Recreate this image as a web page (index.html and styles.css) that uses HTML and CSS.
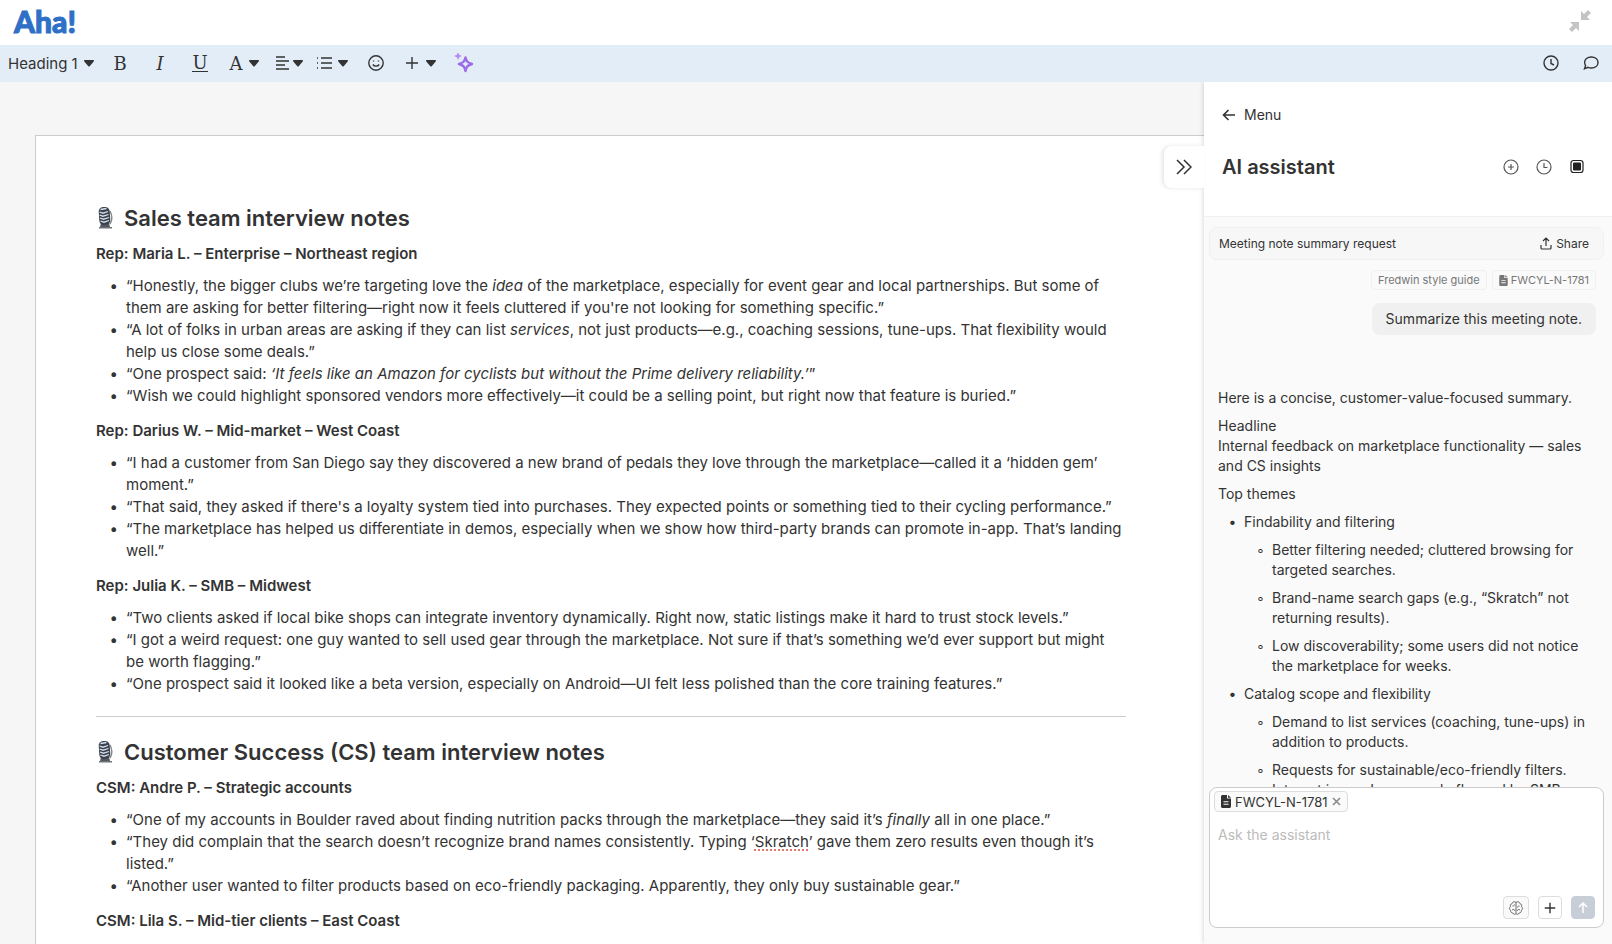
FILE: index.html
```html
<!DOCTYPE html>
<html lang="en">
<head>
    <meta charset="UTF-8">
    <meta name="viewport" content="width=device-width, initial-scale=1.0">
    <title>Aha! - Interview notes</title>
    <link rel="stylesheet" href="styles.css">
</head>
<body>
    <!-- Shared icons -->
    <svg class="sprite" aria-hidden="true">
        <symbol id="caret" viewBox="0 0 10 7"><path d="M1 0h8c.9 0 1.300 1 .7 1.600L5.700 6.300c-.4.4-1 .4-1.400 0L.3 1.600C-.3 1 .1 0 1 0z" fill="currentColor"/></symbol>
        <symbol id="clock" viewBox="0 0 16 16"><circle cx="8" cy="8" r="7"/><path d="M8 4v4.500l3 1.500"/></symbol>
        <symbol id="plus" viewBox="0 0 16 16"><path d="M8 2v12M2 8h12"/></symbol>
        <symbol id="file" viewBox="0 0 10 13"><path d="M1.500 0H6v3.500h4v8c0 .8-.7 1.500-1.500 1.500h-7C.7 13 0 12.300 0 11.500v-10C0 .7.700 0 1.500 0zM7 0l3 2.700H7zM2.500 6.200v1h5v-1zM2.500 8.700v1h5v-1z" fill="currentColor" fill-rule="evenodd" stroke="none"/></symbol>
        <symbol id="mic" viewBox="0 0 18 24">
            <path d="M5 17l-1 4h10l-1-4z" fill="#55585e"/>
            <path d="M3 21h13v1.500H3z" fill="#6d7076"/>
            <path d="M14 5c2 4 2.500 9 0 13" fill="none" stroke="#85888e" stroke-width="1.500"/>
            <rect x="3" y="1" width="11" height="18" rx="4.500" fill="#3c424c" transform="rotate(-4 8 10)"/>
            <path d="M4.500 3.500l6-1M3.500 6l3.500 1.200 5-1.700M3.500 9l3.500 1.200 5.500-1.700M4 12l3.500 1.200 5.500-1.700M4.500 15l3.500 1.200 5-1.700" fill="none" stroke="#d4dfec" stroke-width="1.300"/>
        </symbol>
    </svg>

    <header class="topbar">
        <a href="#" class="logo">Aha!</a>
        <button class="exit" aria-label="Exit full screen">
            <svg width="22" height="22" viewBox="0 0 22 22" fill="#c4c4c4"><path d="M12 1v9h9l-3-3 4-4-3-3-4 4zM10 21v-9H1l3 3-4 4 3 3 4-4z"/></svg>
        </button>
    </header>

    <div class="toolbar">
        <div class="heading-picker">
            <select aria-label="Text style"><option>Heading 1</option><option>Heading 2</option></select>
            <svg class="caret"><use href="#caret"/></svg>
        </div>
        <button class="tool letter" aria-label="Bold">B</button>
        <button class="tool letter" aria-label="Italic"><i>I</i></button>
        <button class="tool letter" aria-label="Underline"><span class="under">U</span></button>
        <button class="tool drop letter" aria-label="Text color">A <svg class="caret"><use href="#caret"/></svg></button>
        <button class="tool drop narrow" aria-label="Align">
            <svg class="icon" viewBox="0 0 16 16"><path d="M2 2h9M2 6h13M2 10h9M2 14h13"/></svg>
            <svg class="caret"><use href="#caret"/></svg>
        </button>
        <button class="tool drop" aria-label="List">
            <svg class="icon" viewBox="0 0 16 16"><path d="M5 3h11M5 8h11M5 13h11M1 3h1M1 8h1M1 13h1"/></svg>
            <svg class="caret"><use href="#caret"/></svg>
        </button>
        <button class="tool" aria-label="Emoji">
            <svg class="icon" viewBox="0 0 16 16"><circle cx="8" cy="8" r="7.200"/><path d="M4.800 9.500c1.400 2.200 5 2.200 6.400 0M5.500 5.600v1M10.500 5.600v1"/></svg>
        </button>
        <button class="tool drop" aria-label="Insert">
            <svg class="icon"><use href="#plus"/></svg>
            <svg class="caret"><use href="#caret"/></svg>
        </button>
        <button class="tool" aria-label="AI">
            <svg width="20" height="20" viewBox="0 0 20 20" fill="none">
                <path d="M11.500 4.500c.9 4 2 5.100 6.500 6.500-4.500 1.400-5.600 2.500-6.500 7-.9-4.500-2-5.600-6.500-7 4.500-1.400 5.600-2.500 6.500-6.500z" stroke="#9b6bea" stroke-width="2.400" stroke-linejoin="round"/>
                <path d="M4 0l1.200 2.800L8 4 5.200 5.200 4 8 2.800 5.200 0 4l2.800-1.200z" transform="translate(0 -1)" fill="#b58cf5"/>
            </svg>
        </button>
        <div class="toolbar-right">
            <button class="tool" aria-label="History"><svg class="icon"><use href="#clock"/></svg></button>
            <button class="tool" aria-label="Comments">
                <svg class="icon" viewBox="0 0 16 16"><path d="M8.300 2C12.300 2 15 4.400 15 7.500S12.300 13 8.300 13c-1.200 0-2.300-.2-3.300-.7L1.500 13.700 2.600 10.500C1.900 9.600 1.600 8.600 1.600 7.500 1.600 4.400 4.300 2 8.300 2z"/></svg>
            </button>
        </div>
    </div>

    <div class="workspace">
        <main class="canvas">
            <article class="note">
                <h1><svg class="mic"><use href="#mic"/></svg>Sales team interview notes</h1>
                <h2>Rep: Maria L. – Enterprise – Northeast region</h2>
                <ul>
                    <li>“Honestly, the bigger clubs we’re targeting love the <em>idea</em> of the marketplace, especially for event gear and local partnerships. But some of them are asking for better filtering—right now it feels cluttered if you're not looking for something specific.”</li>
                    <li>“A lot of folks in urban areas are asking if they can list <em>services</em>, not just products—e.g., coaching sessions, tune-ups. That flexibility would help us close some deals.”</li>
                    <li>“One prospect said: <em>‘It feels like an Amazon for cyclists but without the Prime delivery reliability.’</em>”</li>
                    <li>“Wish we could highlight sponsored vendors more effectively—it could be a selling point, but right now that feature is buried.”</li>
                </ul>
                <h2>Rep: Darius W. – Mid-market – West Coast</h2>
                <ul>
                    <li>“I had a customer from San Diego say they discovered a new brand of pedals they love through the marketplace—called it a ‘hidden gem’ moment.”</li>
                    <li>“That said, they asked if there's a loyalty system tied into purchases. They expected points or something tied to their cycling performance.”</li>
                    <li>“The marketplace has helped us differentiate in demos, especially when we show how third-party brands can promote in-app. That’s landing well.”</li>
                </ul>
                <h2>Rep: Julia K. – SMB – Midwest</h2>
                <ul>
                    <li>“Two clients asked if local bike shops can integrate inventory dynamically. Right now, static listings make it hard to trust stock levels.”</li>
                    <li>“I got a weird request: one guy wanted to sell used gear through the marketplace. Not sure if that’s something we’d ever support but might be worth flagging.”</li>
                    <li>“One prospect said it looked like a beta version, especially on Android—UI felt less polished than the core training features.”</li>
                </ul>
                <hr>
                <h1><svg class="mic"><use href="#mic"/></svg>Customer Success (CS) team interview notes</h1>
                <h2>CSM: Andre P. – Strategic accounts</h2>
                <ul>
                    <li>“One of my accounts in Boulder raved about finding nutrition packs through the marketplace—they said it’s <em>finally</em> all in one place.”</li>
                    <li>“They did complain that the search doesn’t recognize brand names consistently. Typing ‘<span class="misspelled">Skratch</span>’ gave them zero results even though it’s listed.”</li>
                    <li>“Another user wanted to filter products based on eco-friendly packaging. Apparently, they only buy sustainable gear.”</li>
                </ul>
                <h2>CSM: Lila S. – Mid-tier clients – East Coast</h2>
            </article>
        </main>

        <aside class="panel">
            <button class="collapse" aria-label="Collapse panel">
                <svg width="16" height="16" viewBox="0 0 16 16" fill="none" stroke="currentColor" stroke-width="1.500"><path d="M1 1l7 7-7 7M8 1l7 7-7 7"/></svg>
            </button>

            <div class="panel-head">
                <a href="#" class="back">
                    <svg width="14" height="12" viewBox="0 0 14 12" fill="none" stroke="currentColor" stroke-width="1.600"><path d="M13 6H2M6.500 1l-5 5 5 5"/></svg>
                    Menu
                </a>
                <div class="title-row">
                    <h2>AI assistant</h2>
                    <button class="round" aria-label="New chat"><svg viewBox="0 0 16 16"><circle cx="8" cy="8" r="7"/><path d="M8 5v6M5 8h6"/></svg></button>
                    <button class="round" aria-label="Chat history"><svg viewBox="0 0 16 16"><circle cx="8" cy="8" r="7"/><path d="M8 4v4.500h3.500"/></svg></button>
                    <button class="round dark" aria-label="Panel size"><svg viewBox="0 0 16 16"><rect x="2" y="1.500" width="12" height="12" rx="2.500"/><rect x="4" y="3.500" width="8" height="8" rx="1" fill="currentColor" stroke="none"/></svg></button>
                </div>
            </div>

            <div class="chat">
                <div class="chat-title">
                    <span>Meeting note summary request</span>
                    <button class="share">
                        <svg width="12" height="13" viewBox="0 0 12 13" fill="none" stroke="currentColor" stroke-width="1.200"><path d="M6 9V1M3 4l3-3 3 3M1 8v3c0 .6.400 1 1 1h8c.6 0 1-.4 1-1V8"/></svg>
                        Share
                    </button>
                </div>
                <div class="context">
                    <span class="tag">Fredwin style guide</span>
                    <span class="tag"><svg width="9" height="11"><use href="#file"/></svg>FWCYL-N-1781</span>
                </div>
                <p class="prompt">Summarize this meeting note.</p>

                <div class="answer">
                    <p>Here is a concise, customer-value-focused summary.</p>
                    <p>Headline<br>Internal feedback on marketplace functionality — sales and CS insights</p>
                    <p>Top themes</p>
                    <ul>
                        <li>Findability and filtering
                            <ul>
                                <li>Better filtering needed; cluttered browsing for targeted searches.</li>
                                <li>Brand-name search gaps (e.g., “Skratch” not returning results).</li>
                                <li>Low discoverability; some users did not notice the marketplace for weeks.</li>
                            </ul>
                        </li>
                        <li>Catalog scope and flexibility
                            <ul>
                                <li>Demand to list services (coaching, tune-ups) in addition to products.</li>
                                <li>Requests for sustainable/eco-friendly filters. Interest in used gear resale flagged by SMB.</li>
                            </ul>
                        </li>
                    </ul>
                </div>
            </div>

            <form class="composer">
                <div class="attached">
                    <svg width="10" height="13"><use href="#file"/></svg>
                    <span>FWCYL-N-1781</span>
                    <button type="button" aria-label="Remove"><svg width="9" height="9" viewBox="0 0 9 9" stroke="#8a8a8a" stroke-width="1.600"><path d="M1 1l7 7M8 1L1 8"/></svg></button>
                </div>
                <textarea aria-label="Ask the assistant" placeholder="Ask the assistant"></textarea>
                <div class="actions">
                    <button type="button" class="brain" aria-label="Model">
                        <svg width="14" height="14" viewBox="0 0 14 14" fill="none" stroke="#666" stroke-width="1"><path d="M7 1.500C5.500 0 3.500.8 3.200 2.500 1.500 3 1 4.500 1.500 5.500.2 6.500.3 8.500 1.500 9.300c0 1.700 1 2.600 2.300 2.700C4.600 13.600 6.300 13.600 7 12.500c.7 1.100 2.400 1.100 3.200-.5 1.300-.1 2.300-1 2.300-2.700 1.200-.8 1.300-2.800 0-3.800.5-1-.0-2.500-1.700-3C10.500.8 8.500 0 7 1.500zM7 1.500v11M3.500 5c1.200 0 2-.6 2-1.500M3 9c1.200-1 2.500-.6 2.800.8M10.500 5c-1.200 0-2 .6-2 1.500M11 9c-1.200-1-2.500-.6-2.800.8"/></svg>
                    </button>
                    <button type="button" aria-label="Add"><svg width="14" height="14" fill="none" stroke="currentColor" stroke-width="1.600"><use href="#plus"/></svg></button>
                    <button type="submit" class="send" aria-label="Send"><svg width="12" height="12" viewBox="0 0 12 12" fill="none" stroke="#fff" stroke-width="1.500"><path d="M6 11V1M2 5l4-4 4 4"/></svg></button>
                </div>
            </form>
        </aside>
    </div>
</body>
</html>
```
FILE: styles.css
```css
* {
    box-sizing: border-box;
}

body {
    margin: 0;
    height: 100vh;
    display: flex;
    flex-direction: column;
    overflow: hidden;
    font-family: Inter, "Liberation Sans", sans-serif;
    font-size: 15px;
    color: #333;
    background: #fff;
}

button, select, textarea {
    font: inherit;
    color: inherit;
    background: none;
    border: none;
    padding: 0;
    margin: 0;
}

button {
    display: flex;
    align-items: center;
    justify-content: center;
    cursor: pointer;
}

a {
    color: inherit;
    text-decoration: none;
}

.sprite {
    display: none;
}

/* Top bar */
.topbar {
    flex: none;
    height: 45px;
    display: flex;
    align-items: center;
    justify-content: space-between;
    padding: 0 21px 4px 14px;
}

.logo {
    font-family: Lato, sans-serif;
    font-weight: 900;
    font-size: 30px;
    line-height: 40px;
    color: #2e6fc7;
    -webkit-text-stroke: 1px #2e6fc7;
}

/* Toolbar */
.toolbar {
    flex: none;
    height: 37px;
    display: flex;
    align-items: stretch;
    padding-bottom: 1px;
    background: #e3edf8;
}

.heading-picker {
    display: flex;
    align-items: center;
    width: 100px;
    padding-left: 8px;
}

.heading-picker select {
    appearance: none;
    width: 76px;
}

.caret {
    width: 10px;
    height: 7px;
}

.tool {
    width: 40px;
}

.drop {
    width: 48px;
    gap: 6px;
}

.narrow {
    width: 40px;
    gap: 3px;
}

.letter {
    font-family: "DejaVu Serif", serif;
    font-size: 18px;
}

.under {
    line-height: 16px;
    border-bottom: 1px solid #333;
}

.icon {
    width: 16px;
    height: 16px;
    fill: none;
    stroke: currentColor;
    stroke-width: 1.4;
}

.toolbar-right {
    display: flex;
    margin-left: auto;
    padding-right: 1px;
}

/* Document */
.workspace {
    flex: 1;
    min-height: 0;
    display: flex;
}

.canvas {
    flex: 1;
    min-width: 0;
    overflow: hidden;
    padding: 53px 0 0 35px;
    background: #f6f6f6;
}

.note {
    min-height: 100%;
    padding: 66px 78px 40px 60px;
    background: #fff;
    border: 1px solid #ccc;
    border-right: none;
    line-height: 22px;
}

.note h1 {
    display: flex;
    align-items: center;
    gap: 10px;
    margin: 0 0 9px;
    font-size: 22px;
    font-weight: 600;
    line-height: 32px;
}

.mic {
    width: 18px;
    height: 24px;
}

.note h2 {
    margin: 13px 0 10px;
    font-size: 15px;
    font-weight: 600;
    line-height: 22px;
}

.note h1 + h2 {
    margin-top: 0;
}

.note ul {
    margin: 0;
    padding-left: 30px;
    list-style-type: "•\00a0\00a0";
}

.note hr {
    height: 1px;
    margin: 21px 0 19px;
    border: none;
    background: #ccc;
}

.misspelled {
    text-decoration: underline dotted #e0483e;
    text-underline-offset: 3px;
}

/* AI panel */
.panel {
    position: relative;
    flex: none;
    width: 408px;
    display: flex;
    flex-direction: column;
    background: #fafafa;
    box-shadow: 0 0 5px rgba(0, 0, 0, 0.2);
    clip-path: inset(0 0 0 -60px);
}

.collapse {
    position: absolute;
    top: 64px;
    left: -40px;
    width: 40px;
    height: 42px;
    background: #fff;
    border-radius: 8px 0 0 8px;
    box-shadow: -2px 0 4px rgba(0, 0, 0, 0.1);
}

.panel-head {
    flex: none;
    height: 135px;
    padding: 23px 27px 0 18px;
    background: #fff;
    border-bottom: 1px solid #f0f0f0;
}

.back {
    display: flex;
    align-items: center;
    gap: 8px;
    font-size: 14px;
    line-height: 20px;
}

.title-row {
    display: flex;
    align-items: center;
    gap: 17px;
    margin-top: 28px;
}

.title-row h2 {
    flex: 1;
    margin: 0;
    font-size: 20px;
    font-weight: 600;
    line-height: 28px;
}

.round {
    color: #555;
}

.round svg {
    width: 16px;
    height: 16px;
    fill: none;
    stroke: currentColor;
    stroke-width: 1.2;
}

.dark {
    color: #222;
}

.chat {
    flex: 1;
    min-height: 0;
    overflow: hidden;
    padding: 10px 8px 0 5px;
}

.chat-title {
    display: flex;
    align-items: center;
    justify-content: space-between;
    height: 33px;
    padding: 0 14px 0 9px;
    font-size: 12px;
    background: #f7f7f7;
    border: 1px solid #f0f0f0;
    border-radius: 8px;
}

.share {
    gap: 4px;
}

.context {
    display: flex;
    justify-content: flex-end;
    gap: 5px;
    margin: 10px 8px 0 0;
}

.tag {
    display: flex;
    align-items: center;
    gap: 3px;
    height: 20px;
    padding: 0 6px;
    font-size: 11px;
    color: #777;
    border: 1px solid #f0f0f0;
    border-radius: 4px;
}

.prompt {
    width: fit-content;
    margin: 13px 8px 0 auto;
    padding: 6px 14px;
    font-size: 14px;
    line-height: 20px;
    background: #f0f0f0;
    border-radius: 8px;
}

.answer {
    margin-top: 53px;
    padding: 0 8px 0 9px;
    font-size: 14px;
    line-height: 20px;
}

.answer p {
    margin: 0 0 8px;
}

.answer ul {
    margin: 0;
    padding-left: 26px;
    list-style-type: "•\00a0\00a0";
}

.answer ul ul {
    padding-left: 28px;
    list-style-type: "◦\00a0\00a0";
}

.answer li {
    margin-top: 8px;
}

.composer {
    flex: none;
    display: flex;
    flex-direction: column;
    height: 141px;
    margin: 0 8px 16px 5px;
    padding: 3px 8px 8px 4px;
    background: #fff;
    border: 1px solid #ccc;
    border-radius: 8px;
}

.attached {
    display: flex;
    align-items: center;
    align-self: flex-start;
    gap: 4px;
    height: 21px;
    padding: 0 6px;
    font-size: 13px;
    background: #fafafa;
    border: 1px solid #ddd;
    border-radius: 4px;
}

.composer textarea {
    flex: 1;
    min-height: 0;
    padding: 13px 4px 0;
    font-size: 14px;
    line-height: 20px;
    resize: none;
    outline: none;
}

.composer textarea::placeholder {
    color: #bbb;
}

.actions {
    display: flex;
    justify-content: flex-end;
    gap: 9px;
}

.actions button {
    width: 24px;
    height: 23px;
    border: 1px solid #ddd;
    border-radius: 4px;
}

.actions .brain {
    width: 26px;
    background: #fafafa;
}

.actions .send {
    background: #c8ced8;
    border-color: #c8ced8;
}
```
